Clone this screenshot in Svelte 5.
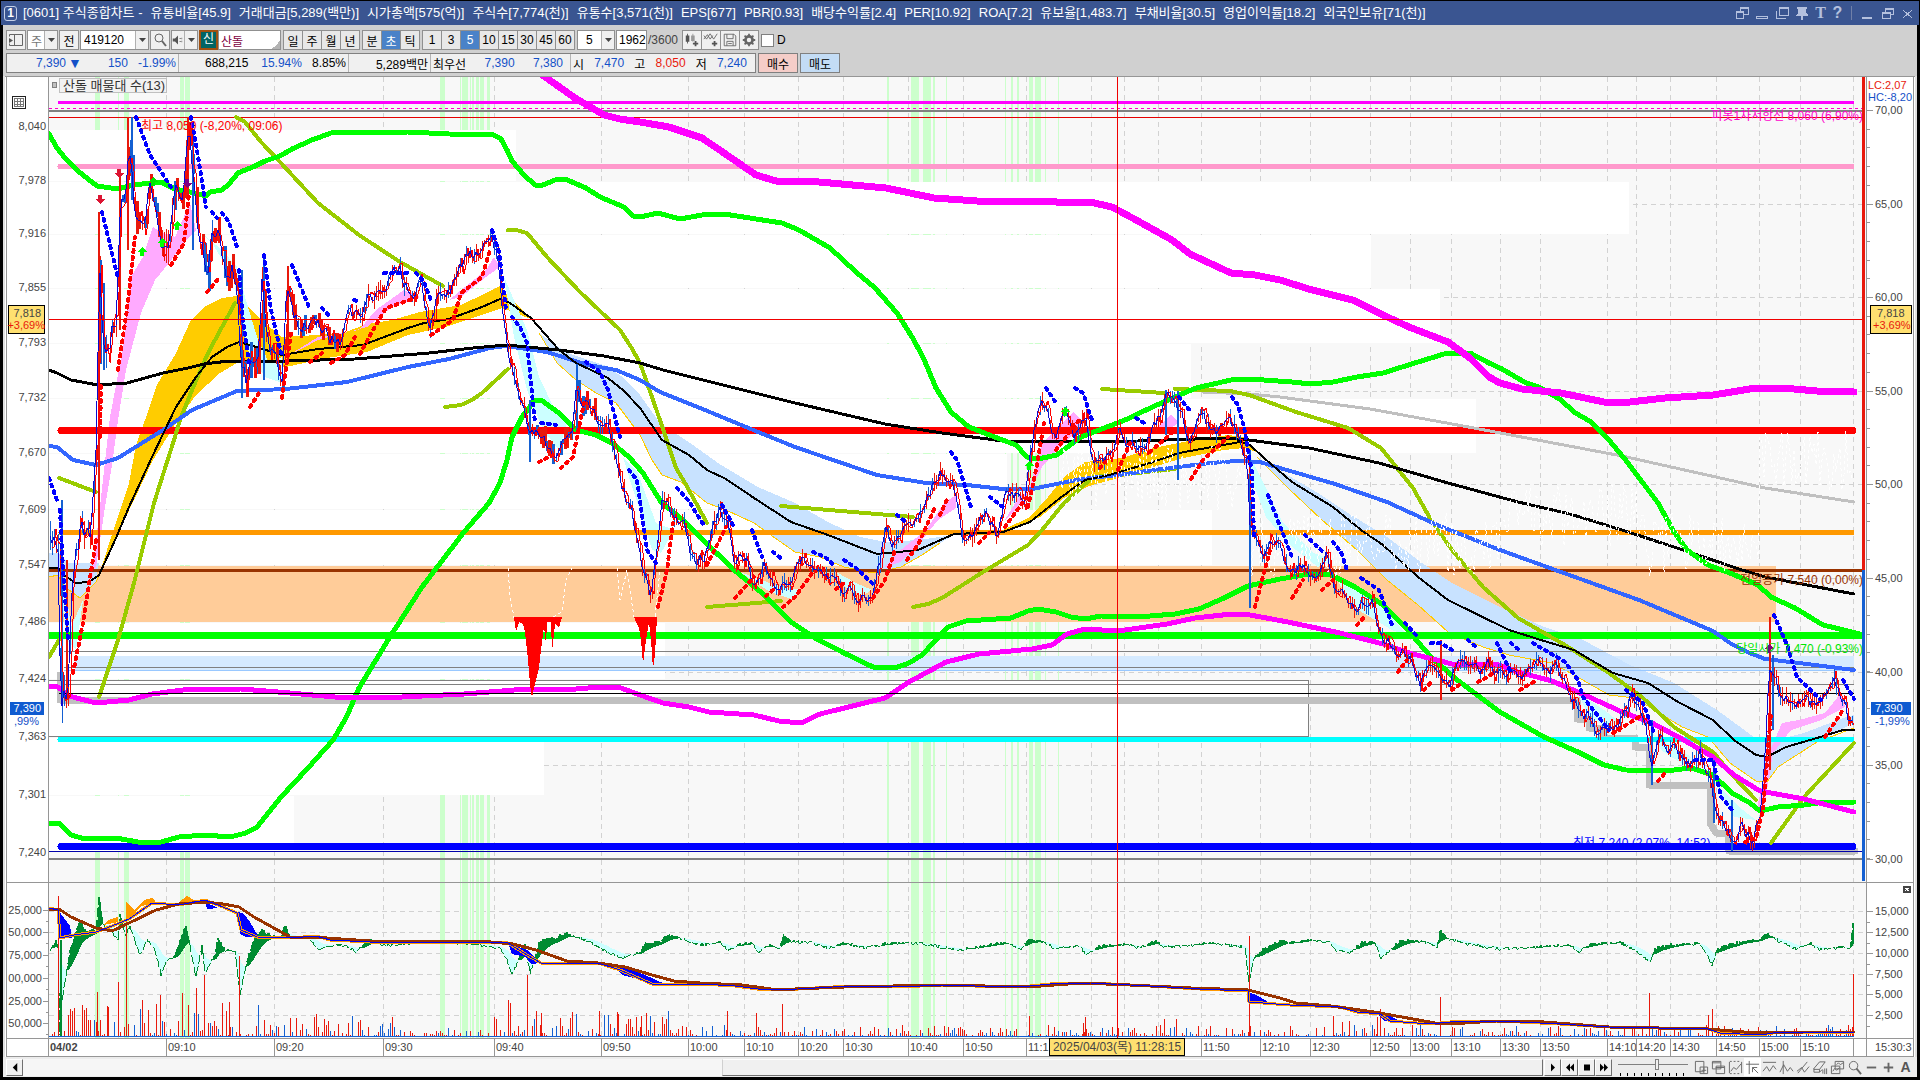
<script>
  // Title bar
  const stats = [
    '[0601] 주식종합차트 -', '유통비율[45.9]', '거래대금[5,289(백만)]', '시가총액[575(억)]', '주식수[7,774(천)]',
    '유통수[3,571(천)]', 'EPS[677]', 'PBR[0.93]', '배당수익률[2.4]', 'PER[10.92]', 'ROA[7.2]', '유보율[1,483.7]',
    '부채비율[30.5]', '영업이익률[18.2]', '외국인보유[71(천)]'
  ];

  // Toolbar state
  let code = $state('419120');
  let name = $state('산돌');
  let count = $state('1962');
  let unit = $state('초');
  let step = $state('5');
  let dual = $state(false);
  let zoom = $state(56);

  const periods = ['일', '주', '월', '년'];
  const units = ['분', '초', '틱'];
  const steps = ['1', '3', '5', '10', '15', '30', '45', '60'];

  // Axes
  const times = [
    [166, '09:10'], [274, '09:20'], [383, '09:30'], [494, '09:40'], [601, '09:50'], [688, '10:00'], [744, '10:10'],
    [798, '10:20'], [843, '10:30'], [908, '10:40'], [963, '10:50'], [1026, '11:1'], [1091, ''], [1124, ''],
    [1158, ''], [1201, '11:50'], [1260, '12:10'], [1310, '12:30'], [1370, '12:50'], [1410, '13:00'],
    [1451, '13:10'], [1500, '13:30'], [1540, '13:50'], [1607, '14:10'], [1636, '14:20'], [1670, '14:30'],
    [1716, '14:50'], [1759, '15:00'], [1800, '15:10'], [1853, '']
  ];
  const prices = [
    [125, '8,040'], [179, '7,978'], [232, '7,916'], [286, '7,855'], [341, '7,793'], [396, '7,732'], [451, '7,670'],
    [508, '7,609'], [563, '7,547'], [620, '7,486'], [677, '7,424'], [735, '7,363'], [793, '7,301'], [851, '7,240']
  ];
  const ratios = [
    [110, '70,00'], [204, '65,00'], [297, '60,00'], [391, '55,00'], [484, '50,00'],
    [578, '45,00'], [672, '40,00'], [765, '35,00'], [859, '30,00']
  ];
  const leftVolumes = [[910, '25,000'], [932, '50,000'], [955, '75,000'], [978, '00,000'], [1001, '25,000'], [1023, '50,000']];
  const rightVolumes = [[911, '15,000'], [932, '12,500'], [953, '10,000'], [974, '7,500'], [994, '5,000'], [1015, '2,500']];
  const minorTicks = Array.from({ length: 41 }, (_, i) => 110 + Math.round(i * 18.7)).filter((y) => y < 880);

  // Volume at price: [top, bottom, right edge]
  const bands = [
    [130, 181, 516], [182, 234, 1629], [235, 288, 1371], [289, 343, 1440], [344, 398, 1191], [399, 453, 1476],
    [454, 509, 1007], [510, 565, 1212], [623, 679, 665], [738, 795, 544], [796, 851, 294]
  ];
  // Highlighted sessions: [left, width]
  const sessions = [
    [95, 5], [118, 1], [124, 5], [180, 4], [185, 5], [440, 5], [460, 1], [462, 6], [470, 1], [472, 2], [476, 3],
    [480, 4], [487, 3], [887, 2], [911, 8], [923, 8], [933, 2], [946, 1], [1005, 1], [1011, 2], [1017, 2],
    [1029, 4], [1035, 6], [1045, 1], [1058, 1]
  ];

  const clouds = [
    ['#c8e2ff', '49,553 58,553 69,563 99,563 96,582 80,598 65,587 58,575 49,577'],
    ['#ffcc00', '99,575 107,550 118,517 129,483 136,445 145,420 157,385 176,353 190,322 204,307 222,298 237,296 249,307 261,320 282,337 318,335 343,333 367,324 392,320 420,312 461,305 486,293 500,286 510,298 531,319 502,308 490,312 473,318 445,327 408,335 367,352 327,358 286,367 261,363 237,363 220,373 196,395 176,423 153,460 134,500 107,557'],
    ['#c8e2ff', '539,333 567,353 604,365 624,378 640,395 660,423 693,445 718,463 758,487 795,503 828,522 860,537 885,542 918,540 954,535 940,543 922,555 901,567 873,573 844,567 820,557 795,552 775,538 754,523 726,510 707,503 681,482 662,475 652,460 640,435 616,403 596,393 576,380 557,363'],
    ['#ffcc00', '1003,530 1030,517 1048,497 1064,477 1085,462 1122,458 1154,448 1183,442 1228,435 1244,437 1256,452 1244,448 1224,450 1183,458 1150,468 1122,477 1089,486 1064,498 1040,517 1007,530'],
    ['#c8e2ff', '1257,457 1279,470 1318,493 1348,513 1387,537 1422,563 1452,583 1500,607 1544,627 1583,640 1630,665 1674,683 1717,710 1758,740 1767,742 1804,733 1843,718 1854,715 1854,723 1817,742 1778,767 1767,782 1756,781 1730,763 1708,737 1682,727 1635,698 1609,695 1574,675 1552,663 1509,655 1483,647 1448,632 1418,605 1387,580 1357,550 1322,520 1288,488'],
    ['#ffaaff', '92,577 103,480 110,417 122,353 131,277 143,257 153,227 163,233 175,237 190,203 196,230 184,243 169,263 155,280 141,313 126,370 118,420 112,465 105,507 96,567'],
    ['#ffaaff', '286,357 318,337 359,330 376,310 404,290 420,297 392,307 367,327 318,340'],
    ['#ffaaff', '449,300 486,270 494,257 500,267 486,277 461,297'],
    ['#ffaaff', '885,567 897,553 926,530 944,503 956,495 956,508 938,520 922,540 901,562'],
    ['#ffaaff', '1003,523 1020,495 1028,493 1042,443 1056,430 1073,412 1085,423 1060,447 1042,467 1032,487 1015,510'],
    ['#ffaaff', '1154,430 1171,415 1179,423 1167,430'],
    ['#ffaaff', '1756,813 1769,753 1782,723 1799,720 1825,713 1841,693 1845,707 1821,720 1791,730 1773,753 1765,803'],
    ['#ccffff', '60,575 66,590 71,627 83,600 76,650 66,640'],
    ['#ccffff', '198,230 222,250 237,267 245,297 257,337 269,363 282,357 282,383 265,377 249,353 241,320 233,277 212,243'],
    ['#ccffff', '504,277 527,330 539,377 555,410 567,423 559,450 543,430 527,390 514,337'],
    ['#ccffff', '623,457 638,473 656,523 674,530 661,553 652,550 643,520 629,477'],
    ['#ccffff', '1249,453 1262,480 1283,523 1314,553 1333,560 1318,567 1292,547 1266,517 1253,483'],
    ['#ccffff', '1333,573 1357,590 1383,607 1409,637 1392,630 1353,607'],
    ['#ccffff', '1578,693 1604,710 1617,720 1609,730 1587,713'],
    ['#ccffff', '1652,733 1691,757 1687,767 1661,750'],
    ['#ccffff', '1713,780 1739,807 1756,820 1734,817'],
    ['#ccffff', '740,572 775,585 800,590 795,600 770,592'],
    ['#ccffff', '836,572 856,583 872,590 862,596 846,588']
  ];

  const goldEdges = [
    '539,333 557,363 576,380 596,393 616,403 640,435 652,460 662,475 681,482 707,503 726,510 754,523 775,538 795,552 820,557 844,567 873,573 901,567 922,555 940,543',
    '1257,457 1288,488 1322,520 1357,550 1387,580 1418,605 1448,632 1483,647 1509,655 1552,663 1574,675 1609,695 1635,698 1682,727 1708,737 1730,763 1756,781 1767,782 1778,767 1817,742 1854,728',
    '49,577 58,575 65,587 80,598 96,582 107,557'
  ];

  // Horizontal levels: [y, left, right, width, colour]
  const levels = [
    [102, 58, 1854, 3, '#ff00ff'], [110, 49, 1862, 2, '#808080'], [117, 49, 1862, 1, '#e60000'],
    [166, 60, 1852, 5, '#ff99cc'], [430, 61, 1853, 7, '#ff0000'], [532, 61, 1852, 5, '#ff9900'],
    [570, 49, 1862, 3, '#993300'], [635, 49, 1862, 7, '#00ff00'], [651, 64, 1854, 1, '#808080'],
    [667, 64, 1854, 1, '#808080'], [670, 64, 1854, 1, '#99c8ff'], [680, 49, 1308, 1, '#808080'],
    [684, 64, 1854, 1, '#808080'], [736, 49, 1308, 1, '#808080'],
    [739, 60, 1852, 5, '#00ffff'], [846, 61, 1853, 7, '#0000ff'], [851, 49, 1862, 1, '#0000aa'],
    [858, 49, 1862, 2, '#808080']
  ];

  // Moving averages and bands: [colour, width, points]
  const curves = [
    ['#c0c0c0', 3, '1203,392 1249,394 1280,397 1370,409 1474,428 1622,456 1765,488 1854,502'],
    ['#99cc00', 4, '59,478 96,492'],
    ['#99cc00', 4, '49,657 59,640'],
    ['#99cc00', 4, '99,697 118,640 134,583 154,503 174,440 180,420 192,390 208,353 235,303'],
    ['#99cc00', 4, '236,117 245,122 261,142 280,162 318,203 359,235 400,262 443,286'],
    ['#99cc00', 4, '508,230 516,230 527,233 547,257 580,292 620,330 631,347 640,363 646,380 661,423 676,468 685,483 707,523'],
    ['#99cc00', 4, '445,407 461,405 472,400 482,393 508,369'],
    ['#99cc00', 4, '707,607 781,601'],
    ['#99cc00', 4, '781,506 913,517'],
    ['#99cc00', 4, '913,607 928,604 942,598 983,572 1028,545 1042,530 1064,503 1093,477 1118,475 1175,469'],
    ['#99cc00', 4, '1102,389 1164,393'],
    ['#99cc00', 4, '1175,389 1230,391 1249,395 1296,412 1348,428 1381,448 1413,488 1431,520 1452,550 1483,587 1518,618 1565,645 1609,673 1643,698 1674,727 1713,752 1734,777 1756,800'],
    ['#99cc00', 4, '1771,843 1804,797 1854,743'],
    ['#3366ff', 4, '49,446 57,447 73,460 96,465 118,458 163,430 192,410 237,391 286,389 347,382 408,367 449,359 490,348 506,346 547,352 588,365 616,370 640,380 660,392 705,410 758,432 795,447 877,475 926,483 967,485 1003,489 1032,489 1081,479 1118,475 1162,469 1211,463 1236,461 1260,462 1280,468 1335,484 1387,502 1435,524 1500,550 1561,572 1639,600 1713,631 1730,643 1747,652 1765,659 1799,663 1854,670'],
    ['#000000', 3, '49,370 57,373 71,380 98,385 127,383 163,373 188,368 204,364 229,361 286,361 355,359 429,353 473,348 506,345 559,350 604,356 640,363 663,370 791,402 885,424 942,433 1003,441 1044,442 1138,441 1224,438 1249,440 1309,448 1379,463 1448,483 1518,502 1570,514 1622,530 1674,547 1739,569 1765,577 1854,594'],
    ['#000000', 2, '49,568 58,568 65,576 76,583 89,582 99,575 116,538 129,507 152,457 176,407 196,377 212,357 227,347 239,342 253,346 282,355 318,349 363,345 408,328 424,323 449,319 482,307 500,299 510,303 531,318 559,350 576,363 608,378 624,391 640,408 662,440 689,455 707,470 726,479 754,498 791,522 828,535 877,554 918,550 954,534 1003,532 1030,522 1060,498 1085,480 1109,475 1150,463 1179,453 1240,442 1250,445 1264,458 1292,482 1333,507 1361,530 1383,545 1418,577 1448,600 1509,630 1544,641 1574,650 1613,673 1648,683 1678,702 1713,720 1734,740 1756,755 1767,757 1786,747 1817,738 1843,730 1854,730'],
    ['#00ff00', 5, '49,134 57,148 65,158 78,171 88,179 97,186 118,189 133,185 161,182 175,189 190,192 198,194 206,196 210,192 222,190 229,184 238,173 253,167 265,161 280,156 292,149 312,140 331,133 408,132 449,134 494,135 501,139 507,150 512,161 524,175 535,185 543,185 555,180 565,179 586,188 600,197 624,207 633,216 640,217 658,213 680,219 702,215 724,214 782,223 799,230 830,248 856,272 875,288 897,313 912,337 923,357 936,388 951,412 969,427 992,436 1016,445 1027,457 1038,459 1057,455 1081,437 1107,427 1125,420 1146,410 1168,400 1196,388 1231,380 1250,379 1292,382 1311,384 1333,382 1357,377 1383,373 1418,362 1444,354 1470,353 1489,363 1502,369 1526,383 1539,387 1561,400 1574,412 1591,422 1609,440 1624,458 1643,483 1658,503 1674,532 1687,550 1708,565 1730,573 1758,585 1771,597 1795,608 1823,625 1860,634'],
    ['#00ff00', 5, '49,823 59,823 71,835 85,839 116,838 138,842 161,842 179,837 205,835 230,837 246,833 257,827 281,797 308,768 333,740 346,718 359,688 388,640 422,587 464,532 489,503 500,483 507,460 512,437 522,417 535,400 541,400 559,413 576,430 596,435 612,443 629,457 643,473 661,502 683,520 700,537 734,570 762,593 791,622 815,638 844,653 873,667 895,668 909,663 922,655 934,642 948,627 966,621 1011,618 1028,611 1038,609 1056,612 1071,617 1085,619 1101,616 1138,617 1175,614 1199,609 1224,598 1248,586 1280,579 1309,574 1331,575 1355,587 1383,605 1405,627 1431,657 1457,680 1500,712 1544,737 1578,752 1604,765 1626,770 1665,771 1691,768 1713,775 1732,793 1750,803 1760,811 1778,807 1804,805 1825,802 1854,802'],
    ['#ff00ff', 5, '49,686 58,687 69,696 96,703 129,700 152,694 183,690 241,689 290,693 335,697 402,697 464,694 527,689 576,689 600,687 621,688 643,696 663,703 689,707 709,712 754,715 779,721 801,723 820,714 885,698 909,682 946,662 979,654 1032,649 1052,645 1067,634 1085,629 1118,631 1167,624 1195,618 1232,614 1250,615 1288,622 1340,633 1383,644 1413,654 1452,664 1496,664 1518,672 1552,681 1587,696 1622,712 1652,723 1682,739 1713,757 1734,775 1760,791 1804,799 1854,812'],
    ['#000000', 1, '59,693 1854,693'],
    ['#ff00ff', 7, '541,74 575,98 604,115 620,119 640,122 669,127 702,138 724,153 756,175 776,181 808,181 886,188 934,198 977,201 1047,201 1066,203 1090,202 1112,207 1138,221 1172,240 1190,254 1231,273 1255,275 1280,280 1312,290 1353,300 1383,315 1409,327 1448,342 1470,358 1489,377 1500,383 1522,389 1561,393 1604,402 1630,402 1665,398 1713,395 1756,388 1782,388 1817,391 1854,392']
  ];
  const lowTrail = '60,675 60,700 1577,700 1577,719 1589,719 1589,728 1602,728 1602,738 1635,738 1635,747 1649,747 1649,785 1710,785 1710,823 1716,833 1728,833 1729,851 1855,851';

  // Parabolic SAR runs
  const sarDown = [
    '49,478 58,503', '60,510 63,570 68,640', '102,212 118,278', '136,117 150,155 171,187', '191,117 197,150 206,207', '212,212 217,218', '222,213 229,222 237,247',
    '239,270 243,320 249,363', '264,255 271,310 282,357', '292,265 300,285 309,307', '322,308 331,318', '354,300 360,302', '384,273 410,273',
    '416,273 424,282 431,300', '492,230 499,252 506,310', '512,317 520,327 527,343 535,423', '541,423 556,425', '586,362 600,372 608,390 620,437',
    '629,470 637,480 647,550 656,563', '677,488 688,500 705,527', '722,505 734,527', '752,530 762,557', '773,552 783,560',
    '813,552 825,557 836,567', '844,560 856,568 873,584', '897,515 907,523', '951,452 957,460 971,507', '990,497 1003,507',
    '1046,388 1056,403', '1075,388 1083,393 1093,423', '1136,418 1148,425', '1179,397 1191,412', '1232,397 1238,405 1244,427 1252,473 1254,537',
    '1268,495 1292,557', '1305,535 1322,551', '1333,542 1341,552 1348,573', '1361,578 1379,590 1392,625', '1405,623 1416,635',
    '1431,643 1440,643 1452,650', '1468,640 1476,647', '1497,643 1511,673', '1511,643 1519,650', '1533,643 1565,662 1578,680 1583,697 1609,730',
    '1626,690 1643,703 1654,733', '1695,760 1713,760 1721,797 1734,812', '1774,615 1787,645 1797,677 1821,700', '1843,680 1854,699'
  ];
  const sarUp = [
    '73,673 83,623 96,540', '100,437 101,385', '118,370 127,310 135,237', '171,265 184,243 189,193', '207,292 220,277', '250,407 261,390',
    '282,398 291,333', '310,362 322,353', '331,363 345,355 355,337', '360,354 373,330 386,308 416,298',
    '431,335 453,320 461,293 482,277 490,250', '539,462 553,455', '561,468 573,457 584,403', '658,607 667,570 673,523',
    '707,565 726,527', '735,598 754,577', '766,596 773,590', '783,607 795,597 813,572', '836,589 844,583', '873,598 885,580 895,550',
    '907,560 918,545 936,505', '940,515 948,497', '979,543 989,533', '1005,527 1026,498', '1028,507 1036,470 1044,423',
    '1056,450 1079,420', '1100,468 1105,462', '1118,470 1130,443', '1150,452 1175,430', '1191,479 1203,460 1228,437', '1255,607 1270,550',
    '1292,598 1303,580', '1322,590 1333,580', '1357,625 1366,615', '1398,672 1407,660', '1424,690 1433,680', '1452,690 1459,685',
    '1478,682 1496,672', '1520,690 1537,680', '1613,733 1639,717', '1658,781 1665,773', '1745,842 1756,838 1763,810 1771,713',
    '1825,737 1843,710'
  ];

  // Small deterministic generator so every render draws the same ticks
  function makeRandom(seed) {
    let s = seed;
    return () => {
      s = (s * 1664525 + 1013904223) % 4294967296;
      return s / 4294967296;
    };
  }

  function parse(text) {
    return text.split(' ').map((p) => p.split(',').map(Number));
  }

  function sample(points, x) {
    const i = points.findIndex((p) => p[0] >= x);
    if (i <= 0) return points[i === 0 ? 0 : points.length - 1][1];
    const [x0, y0] = points[i - 1];
    const [x1, y1] = points[i];
    return y0 + ((y1 - y0) * (x - x0)) / (x1 - x0 || 1);
  }

  const closes = parse(
    '49,530 58,545 61,690 67,690 72,600 82,520 90,540 97,440 99,260 103,350 110,330 117,310 120,210 127,190 129,140 133,190 138,220 145,210 150,170 155,200 162,235 168,245 175,205 182,190 187,135 190,150 195,200 200,230 206,265 212,245 220,245 226,265 232,260 238,300 242,370 247,390 252,370 258,370 262,290 266,340 270,370 276,360 282,385 287,295 292,310 300,320 312,325 322,330 330,340 340,340 350,310 362,320 370,300 380,290 388,280 400,275 410,295 420,285 430,330 440,290 452,285 465,265 475,260 483,240 491,237 497,260 504,330 512,370 520,400 528,440 535,430 545,440 555,450 565,440 572,430 576,380 584,400 592,410 600,425 610,440 620,470 630,510 640,560 650,595 656,560 662,510 667,495 675,520 685,530 690,550 697,560 705,555 712,530 720,515 727,520 735,570 745,560 755,588 765,570 775,588 785,588 795,570 805,560 815,565 830,578 845,585 857,597 872,597 880,560 886,525 892,540 900,530 910,535 920,510 930,490 942,475 947,485 955,490 962,530 975,530 985,515 997,530 1005,490 1012,485 1025,500 1030,450 1040,400 1048,410 1055,440 1065,405 1075,430 1085,420 1095,460 1105,465 1120,430 1130,445 1145,440 1160,420 1168,400 1178,410 1190,440 1200,418 1215,435 1228,415 1238,430 1247,460 1250,530 1260,560 1275,540 1290,580 1300,560 1315,580 1327,555 1335,590 1350,608 1360,600 1372,600 1385,640 1400,650 1410,650 1420,682 1428,655 1440,688 1450,680 1458,660 1470,675 1490,668 1505,680 1515,680 1530,670 1540,662 1555,670 1570,690 1580,710 1595,725 1608,733 1620,720 1630,700 1645,720 1651,765 1660,745 1675,750 1690,765 1700,750 1710,770 1716,810 1728,825 1733,842 1742,820 1752,838 1760,810 1766,740 1769,670 1773,670 1780,690 1795,700 1812,705 1825,700 1835,690 1843,700 1850,725 1854,720'
  );

  const random = makeRandom(419120);
  const swing = (x) => (x < 260 ? 26 : x < 300 ? 22 : x < 520 ? 14 : x < 660 ? 16 : 14);
  const candles = [];
  const closeLine = [];
  const fastLine = [];
  let drift = 0;
  for (let x = 50; x < 1854; x += 2) {
    drift = drift * 0.7 + (random() - 0.5) * swing(x) * 0.9;
    const y = sample(closes, x) + drift;
    const up = random() > 0.4;
    const reach = swing(x) * (0.2 + random() * 0.8);
    const body = (x > 120 && x < 340) || (x > 535 && x < 595);
    closeLine.push(`${x},${Math.round(y)}`);
    fastLine.push(`${x + 2},${Math.round(y + (random() - 0.5) * swing(x))}`);
    candles.push({
      x,
      y1: Math.round(y - reach * 0.7),
      y2: Math.round(y + reach * 0.7),
      w: body && random() > 0.3 ? 3 : 1,
      fill: up ? '#e8190c' : '#1460d2'
    });
  }
  // Long wicks
  const wicks = [
    [61, 500, 700, '#1460d2'], [66, 560, 700, '#e8190c'], [98, 212, 560, '#e8190c'], [100, 260, 364, '#1460d2'], [103, 283, 370, '#1460d2'],
    [119, 175, 330, '#e8190c'], [127, 117, 250, '#e8190c'], [131, 117, 200, '#1460d2'], [187, 117, 200, '#e8190c'],
    [192, 132, 250, '#1460d2'], [241, 270, 398, '#1460d2'], [263, 257, 380, '#1460d2'], [287, 266, 360, '#e8190c'], [529, 400, 462, '#1460d2'],
    [576, 364, 430, '#1460d2'], [1165, 390, 435, '#1460d2'], [1177, 391, 480, '#1460d2'], [1249, 450, 608, '#1460d2'], [1440, 640, 700, '#e8190c'],
    [1651, 720, 785, '#1460d2'], [1713, 760, 823, '#1460d2'], [1731, 800, 851, '#1460d2'], [1769, 617, 770, '#e8190c'], [1772, 655, 730, '#1460d2']
  ];

  // Faint echo trace behind the right half of the price panel
  const ghost = [];
  for (let x = 1060; x < 1854; x += 2) {
    const base = x < 1250 ? 478 : x < 1500 ? 545 : x < 1640 ? 515 : x < 1760 ? 545 : 460;
    ghost.push(`${x},${Math.round(base + (random() - 0.5) * 64)}`);
  }

  // Lower panel
  const spikes = [
    [58, 896], [72, 1011], [97, 992], [107, 1006], [118, 982], [126, 915], [142, 1000], [160, 995], [182, 993], [196, 988],
    [204, 975], [229, 1002], [239, 956], [316, 1014], [508, 1000], [510, 1003], [527, 975], [541, 1013], [599, 1011],
    [617, 1012], [630, 1019], [641, 1016], [727, 1011], [756, 1013], [782, 1004], [1029, 1016], [1083, 1023], [1085, 1017],
    [1164, 1019], [1176, 1019], [1210, 1026], [1249, 936], [1333, 1016], [1342, 1022], [1349, 1021], [1377, 1017],
    [1380, 1009], [1440, 997], [1649, 993], [1708, 1015], [1712, 1009], [1853, 974]
  ];
  const volumes = [];
  for (let x = 50; x < 1854; x += 2) {
    const peak = x < 270 ? 34 : x < 400 ? 20 : x < 490 ? 8 : x < 670 ? 26 : 11;
    const h = 1 + Math.round(Math.pow(random(), 3) * peak);
    volumes.push({ x, h, fill: random() > 0.3 ? '#e8190c' : '#1460d2' });
  }

  const strength = parse(
    '49,953 56,940 58,950 60,1035 62,1000 70,950 80,920 85,930 96,930 99,896 103,925 110,930 118,940 120,915 126,935 129,925 140,955 147,940 155,950 161,975 166,963 175,955 186,925 190,945 196,978 202,945 205,973 215,955 218,937 225,950 235,950 240,995 247,960 255,938 262,930 270,935 280,937 285,925 290,937 310,938 318,950 330,945 345,945 356,952 370,938 385,946 420,942 460,943 500,948 507,960 512,975 525,945 530,973 540,940 555,938 566,933 590,942 600,948 615,955 620,958 632,955 640,953 645,943 660,942 668,935 680,938 700,945 720,942 728,950 740,944 752,943 758,953 770,945 780,948 783,935 790,941 810,942 828,948 845,943 865,948 885,943 920,943 960,950 1000,943 1005,942 1020,950 1029,940 1045,942 1055,948 1080,946 1086,955 1100,946 1125,944 1140,948 1155,941 1165,947 1180,946 1210,943 1245,947 1249,983 1253,960 1262,950 1280,941 1290,943 1310,940 1330,942 1335,950 1350,953 1362,942 1375,942 1381,958 1390,950 1400,941 1410,940 1430,943 1437,947 1440,930 1447,938 1460,942 1480,946 1500,949 1570,945 1578,952 1590,944 1620,942 1637,951 1650,962 1655,948 1670,945 1700,943 1712,965 1718,948 1740,942 1755,940 1769,934 1780,942 1797,949 1810,943 1820,950 1840,947 1850,948 1853,924'
  );
  const strengthLine = [];
  const strengthBars = [];
  let average = 948;
  for (let x = 50; x <= 1853; x++) {
    const y = sample(strength, x) + (random() - 0.5) * 3;
    average += (y - average) * 0.08;
    strengthLine.push(`${x},${Math.round(y)}`);
    strengthBars.push({ x, top: Math.min(y, average), h: Math.abs(y - average), fill: y < average ? '#008c32' : '#ccffff' });
  }

  const balance = '49,908 58,910 60,938 74,935 96,932 112,926 129,919 152,903 179,905 205,900 223,907 237,913 241,930 257,937 290,938 316,936 330,940 370,942 491,942 508,943 527,955 541,963 598,963 620,970 652,984 700,984 735,986 765,990 798,989 850,986 920,986 950,985 1000,987 1030,986 1050,984 1091,983 1150,986 1200,989 1248,991 1249,1002 1290,1005 1340,1007 1357,1012 1380,1014 1390,1021 1430,1024 1460,1021 1500,1021 1560,1024 1609,1027 1708,1029 1720,1033 1760,1035 1780,1032 1854,1032';
  const trend = '49,909 59,909 71,917 96,928 112,931 129,923 156,910 179,904 205,902 223,904 239,907 254,917 290,937 312,937 370,941 424,941 491,942 513,944 536,950 567,961 598,963 625,967 652,975 674,981 700,983 742,985 771,989 795,989 844,987 942,985 1028,987 1081,983 1130,985 1191,988 1248,990 1280,998 1296,1003 1331,1006 1374,1012 1413,1019 1435,1023 1465,1023 1496,1021 1544,1022 1609,1027 1708,1029 1756,1033 1804,1032 1854,1032';
  const balanceFills = [
    ['#0000ff', '58,910 60,938 72,938 70,926'], ['#0000ff', '205,902 207,909 218,908'],
    ['#0000ff', '238,912 240,934 246,937 258,936 250,922 244,914'], ['#0000ff', '508,943 512,954 526,957 531,964 541,963 527,950'],
    ['#0000ff', '598,963 617,970 622,975 638,979 652,985 665,984 645,975 620,966'], ['#0000ff', '757,986 757,990 780,991'],
    ['#0000ff', '1249,992 1249,1002 1270,1003 1258,996'], ['#0000ff', '1375,1012 1384,1021 1400,1021 1388,1015'],
    ['#ff9900', '126,920 126,901 134,910 144,900 152,898 156,901 140,907 132,917'], ['#ff9900', '178,903 187,896 196,901 190,905'],
    ['#ff9900', '103,925 108,920 118,917 118,922']
  ];

  // Signal arrows: [x, y, direction, colour]
  const arrows = [
    [100, 199, 'down', '#dc1432'], [119, 173, 'down', '#dc1432'], [187, 183, 'down', '#800080'], [142, 252, 'up', '#00ff00'],
    [162, 243, 'up', '#00ff00'], [177, 226, 'up', '#00ff00'], [153, 182, 'up', '#00e600'], [1029, 466, 'up', '#00ff00'],
    [1065, 412, 'up', '#00ff00'], [1769, 649, 'up', '#800080']
  ];
</script>

{#snippet caret()}
  <svg class="caret" viewBox="0 0 7 4" aria-hidden="true"><path d="M0 0h7L3.5 4z" /></svg>
{/snippet}

<div class="window">
  <header class="titlebar">
    <span class="badge">1</span>
    <h1>{#each stats as stat}<span>{stat}</span>{/each}</h1>
    <div class="window-buttons">
      <button aria-label="화면 연결"><svg viewBox="0 0 14 14"><path d="M1.5 5.5h7v7h-7zM5.5 5.5v-4h8v7h-5" /><path d="M5 2h9M1 6h8" /></svg></button>
      <button aria-label="접기"><svg viewBox="0 0 14 14"><path d="M1.5 10.5h11v2h-11z" /></svg></button>
      <button aria-label="복제"><svg viewBox="0 0 14 14"><path d="M4.5 1.5h9v8h-9zM4 2.500h9M1.500 4.500v8h9" /></svg></button>
      <button aria-label="고정"><svg viewBox="0 0 14 14" class="solid"><path d="M2 1h10v2h-1v4l2 2v1H8v4H6v-4H1V9l2-2V3H2z" /></svg></button>
      <button class="letter" aria-label="글꼴">T</button>
      <button class="letter sans" aria-label="도움말">?</button>
      <i class="divider"></i>
      <button aria-label="최소화"><svg viewBox="0 0 14 14"><path d="M2 11h10M2 12h10" /></svg></button>
      <button aria-label="이전 크기"><svg viewBox="0 0 14 14"><path d="M2.500 6.500h8v6h-8zM2 7h9M5.500 6v-3.500h8v6h-3M5 3h9" /></svg></button>
      <button aria-label="닫기"><svg viewBox="0 0 14 14"><path d="M3 4l9 8M12 4l-9 8" /></svg></button>
    </div>
  </header>

  <section class="toolbar">
    <div class="controls">
      <button class="tool" aria-label="패널"><svg viewBox="0 0 16 16"><path d="M1.500 4.500v-2h13v11h-13v-2M6.500 2.500v11" /><path class="ink" d="M1 6v5l4-2.500z" /></svg></button>
      <button class="pick muted">주<i>{@render caret()}</i></button>
      <button class="tool">전</button>
      <label class="field code"><input aria-label="종목코드" bind:value={code} /><i>{@render caret()}</i></label>
      <button class="tool" aria-label="검색"><svg viewBox="0 0 16 16"><circle cx="7" cy="6" r="4" /><path d="M10 9l4 5" stroke-width="2" /></svg></button>
      <button class="pick speaker" aria-label="소리"><svg viewBox="0 0 16 16"><path class="ink" d="M1 6h3l4-4v12L4 10H1z" /><path d="M10 6h2M10 10h2M13 5v2M13 9v2" /></svg><i>{@render caret()}</i></button>
      <span class="credit">신</span>
      <input class="name" aria-label="종목명" bind:value={name} />
      <div class="group">
        {#each periods as p}<button>{p}</button>{/each}
      </div>
      <div class="group">
        {#each units as u}<button class:active={unit === u} onclick={() => (unit = u)}>{u}</button>{/each}
      </div>
      <div class="group">
        {#each steps as s}<button class:active={step === s} onclick={() => (step = s)}>{s}</button>{/each}
      </div>
      <button class="pick step">{step}<i>{@render caret()}</i></button>
      <input class="count" aria-label="봉 개수" bind:value={count} />
      <span class="total">/3600</span>
      <div class="group icons">
        <button aria-label="봉 추가"><svg viewBox="0 0 18 18"><path class="ink" d="M2 4h4v7H2zM3.500 2h1v11h-1z" /><path class="soft" d="M8 4h4v6H8zM9.500 2h1v9h-1z" /><path class="ink" d="M12 10h2v2h2v2h-2v2h-2v-2h-2v-2h2z" /></svg></button>
        <button aria-label="지표 추가"><svg viewBox="0 0 18 18"><path d="M1 4l3 4 4-6 4 6 4-6M1 8l4-5 3 5 3-4" stroke-width="1" /><path class="ink" d="M12 10h2v2h2v2h-2v2h-2v-2h-2v-2h2z" /></svg></button>
        <button aria-label="저장"><svg viewBox="0 0 18 18"><path d="M2.500 2.500h11l2 2v11h-13zM5.500 2.500v5h7v-5M5.500 15.500v-5h7v5M7 13h4" /></svg></button>
        <button aria-label="설정"><svg viewBox="0 0 18 18"><circle cx="9" cy="9" r="4" stroke-width="3" /><path d="M9 2v3M9 13v3M2 9h3M13 9h3M4 4l2 2M12 12l2 2M4 14l2-2M12 6l2-2" stroke-width="2" /></svg></button>
      </div>
      <label class="check"><input type="checkbox" bind:checked={dual} />D</label>
    </div>

    <div class="quote">
      <div class="cells">
        <div class="cell first fall"><b>7,390</b><b class="mark">▼</b><b>150</b><b>-1.99%</b></div>
        <div class="cell second"><b>688,215</b><b class="fall">15.94%</b><b>8.85%</b></div>
        <div class="cell third"><b>5,289백만</b></div>
        <div class="cell fourth"><b>최우선</b><b class="fall">7,390</b><b class="fall">7,380</b></div>
        <div class="cell fifth"><b>시</b><b class="fall">7,470</b><b>고</b><b class="rise">8,050</b><b>저</b><b class="fall">7,240</b></div>
      </div>
      <button class="order buy">매수</button>
      <button class="order sell">매도</button>
    </div>
  </section>

  <main class="chart">
    <svg class="plot" viewBox="5 76 1910 981" preserveAspectRatio="none" role="img" aria-label="산돌 주식종합차트">
      <defs>
        <clipPath id="price"><rect x="49" y="77" width="1813" height="805" /></clipPath>
        <clipPath id="axis"><rect x="1867" y="77" width="46" height="980" /></clipPath>
        <clipPath id="left-axis"><rect x="7" y="77" width="41" height="961" /></clipPath>
      </defs>
      <rect x="5" y="76" width="1910" height="981" fill="#fff" />
      <rect x="49" y="77" width="1818" height="961" fill="#f8f8f8" />

      <g class="grid">
        {#each times as [x]}<path d="M{x + 0.5} 77V1038" />{/each}
        {#each ratios as [y]}<path d="M49 {y + 0.5}H1862" />{/each}
        {#each rightVolumes as [y]}<path d="M49 {y + 0.5}H1867" />{/each}
      </g>
      {#each sessions as [x, w]}<rect {x} y="77" width={w} height="961" fill="#ccffcc" />{/each}
      {#each bands as [top, bottom, right]}<rect x="49" y={top} width={right - 49} height={bottom - top} fill="#fff" />{/each}
      <rect x="49" y="566" width="1727" height="56" fill="#ffcc99" />
      <rect x="49" y="680" width="1259" height="57" fill="#fff" />
      <path d="M1308.500 680V737" stroke="#808080" fill="none" />
      <rect x="75" y="656" width="1779" height="14" fill="#d5eaff" />

      <g clip-path="url(#price)">
        {#each clouds as [fill, points]}<polygon {points} {fill} />{/each}
        {#each goldEdges as points}<polyline {points} class="line" stroke="#ffcc00" />{/each}
        <polyline points={lowTrail} class="line" stroke="#c0c0c0" stroke-width="7" />
        <text x="1573" y="847" fill="#0000ff">최저 7,240 (2,07%, 14:52)</text>
        {#each levels as [y, x1, x2, w, stroke]}
          <path d="M{x1} {y + 0.5}H{x2}" {stroke} stroke-width={w} stroke-linecap={w > 4 && x1 > 49 ? 'round' : 'butt'} />
        {/each}
        <path d="M49 108.500H1862" stroke="#ff00cc" stroke-dasharray="3 3" />
        {#each curves as [stroke, w, points]}<polyline {points} class="line" {stroke} stroke-width={w} />{/each}

        <polyline points={ghost.join(' ')} class="line ghost" />
        <polyline points="508,568 510,595 514,618 552,618 562,612 566,580 572,568" class="line ghost" />
        <polyline points="617,568 620,600 627,570 634,617 655,617 660,570" class="line ghost" />
        <polygon points="514,617 562,617 559,628 555,624 552,652 551,622 547,622 546,645 544,626 541,650 539,668 536,680 534,688 532,698 530,684 528,660 525,632 523,624 519,622 516,632" fill="#ff0000" />
        <polygon points="634,617 657,617 655,655 653,669 651,640 649,622 646,640 643,664 641,640 639,628 636,622" fill="#ff0000" />

        {#each candles as c}<rect x={c.x} y={c.y1} width={c.w} height={c.y2 - c.y1} fill={c.fill} />{/each}
        {#each wicks as [x, y1, y2, stroke]}<path d="M{x + 0.5} {y1}V{y2}" {stroke} stroke-width="2" />{/each}
        <polyline points={fastLine.join(' ')} class="line" stroke="#ff0000" />
        <polyline points={closeLine.join(' ')} class="line" stroke="#0a0ad2" />
        {#each sarDown as points}<polyline {points} class="line dots" stroke="#0000ff" />{/each}
        {#each sarUp as points}<polyline {points} class="line dots" stroke="#ff0000" />{/each}
        {#each arrows as [x, y, dir, fill]}
          <path d={dir === 'up' ? `M${x} ${y - 5}l5 5h-3v4h-4v-4h-3z` : `M${x} ${y + 5}l5-5h-3v-4h-4v4h-3z`} {fill} />
        {/each}

        <text x="141" y="130" fill="#ff0000">최고 8,050 (-8,20%, 09:06)</text>
        <text x="1863" y="120" fill="#ff00cc" text-anchor="end">피봇1차저항선 8,060 (6,90%)</text>
        <text x="1863" y="584" fill="#993300" text-anchor="end">전일종가 7,540 (0,00%)</text>
        <text x="1863" y="653" fill="#00e600" text-anchor="end">당일시가 7,470 (-0,93%)</text>
      </g>

      <!-- legend -->
      <rect x="52.500" y="82.500" width="4" height="5" fill="#c0c0c0" stroke="#808080" />
      <rect x="59.500" y="78.500" width="107" height="14" fill="#f2f2f2" stroke="#c0c0c0" />
      <text x="63" y="90" class="legend">산돌 매물대 수(13)</text>

      <!-- volume panel -->
      {#each strengthBars as b}<rect x={b.x} y={b.top} width="1" height={b.h} fill={b.fill} />{/each}
      <polyline points={strengthLine.join(' ')} class="line" stroke="#008c32" stroke-dasharray="9 3" />
      {#each volumes as v}<rect x={v.x} y={1037 - v.h} width="1" height={v.h} fill={v.fill} />{/each}
      {#each spikes as [x, y]}<path d="M{x + 0.5} {y}V1037" stroke="#e8190c" />{/each}
      <path d="M60.500 940V1037" stroke="#008c32" stroke-width="2" />
      <path d="M49 1036.500H1854" stroke="#1460d2" />
      {#each balanceFills as [fill, points]}<polygon {points} {fill} />{/each}
      <polyline points={balance} class="line" stroke="#ff9900" stroke-width="3" />
      <polyline points={trend} class="line" stroke="#993300" stroke-width="3" />
      <polyline points={balance} class="line" stroke="#0000ff" />

      <!-- crosshair -->
      <path d="M49 319.500H1862M1117.500 77V1038" stroke="#f00000" />

      <!-- frame -->
      <rect x="1862" y="77" width="3" height="493" fill="#e8190c" />
      <rect x="1862" y="570" width="3" height="311" fill="#1460d2" />
      <path d="M5 76.500H1915M6.500 76V1057M48.500 76V1056M1866.500 76V1056M1913.500 76V1057M6 882.500H1914M6 1038.500H1914M6 1056.500H1914" stroke="#969696" fill="none" />

      <g class="axis" clip-path="url(#left-axis)">
        {#each prices as [y, label]}<text x="46" y={y + 5} text-anchor="end">{label}</text>{/each}
        {#each leftVolumes as [y, label]}
          <text x="42" y={y + 4} text-anchor="end">{label}</text>
          <path d="M43 {y + 0.5}h5M46 {y + 11.5}h2" stroke="#969696" />
        {/each}
      </g>
      <g class="axis" clip-path="url(#axis)">
        {#each minorTicks as y}<path d="M1867 {y + 0.5}h3" stroke="#969696" />{/each}
        {#each ratios as [y, label]}
          <path d="M1867 {y + 0.5}h6" stroke="#969696" />
          <text x="1875" y={y + 4}>{label}</text>
        {/each}
        {#each rightVolumes as [y, label]}
          <path d="M1867 {y + 0.5}h6M1867 {y + 11.5}h3" stroke="#969696" />
          <text x="1875" y={y + 4}>{label}</text>
        {/each}
        <text x="1868" y="89" class="rise">LC:2,07</text>
        <text x="1868" y="101" class="fall">HC:-8,20</text>
        <text x="1875" y="1051">15:30:3</text>
      </g>

      <g class="axis">
        <text x="50" y="1051" font-weight="bold">04/02</text>
        {#each times as [x, label]}
          <path d="M{x + 0.5} 1039V1056" stroke="#969696" />
          {#if label}<text x={x + 2} y="1051">{label}</text>{/if}
        {/each}
      </g>

      <!-- price and time tags -->
      <g class="axis">
        <rect x="8.500" y="305.500" width="36" height="28" class="tag" />
        <text x="41" y="317" text-anchor="end">7,818</text>
        <text x="45" y="329" text-anchor="end" class="hot">+3,69%</text>
        <rect x="1870.500" y="305.500" width="41" height="28" class="tag" />
        <text x="1877" y="317">7,818</text>
        <text x="1873" y="329" class="hot">+3,69%</text>
        <rect x="10" y="702" width="34" height="13" fill="#0f5bd0" />
        <text x="41" y="712" text-anchor="end" class="on">7,390</text>
        <text x="39" y="725" text-anchor="end" class="fall">,99%</text>
        <rect x="1871" y="702" width="40" height="13" fill="#0f5bd0" />
        <text x="1875" y="712" class="on">7,390</text>
        <text x="1875" y="725" class="fall">-1,99%</text>
        <rect x="1049.500" y="1038.500" width="135" height="17" class="tag" />
        <text x="1117" y="1051" text-anchor="middle" class="stamp">2025/04/03(목) 11:28:15</text>
      </g>

      <g fill="none" stroke="#222">
        <rect x="12.500" y="96.500" width="13" height="12" stroke-width="1" />
        <path d="M14.500 98.500h9v8h-9zM17.500 98v9M20.500 98v9M14 101.500h10M14 104.500h10" stroke="#777" />
      </g>
      <rect x="1903" y="886" width="8" height="7" fill="#444" />
      <path d="M1905 888l4 3M1909 888l-4 3" stroke="#fff" />
    </svg>
  </main>

  <footer class="bottom">
    <div class="scroll">
      <button aria-label="왼쪽으로"><svg viewBox="0 0 8 8"><path d="M6 0v8L2 4z" /></svg></button>
      <div class="track"><div class="thumb"></div></div>
    </div>
    <div class="play">
      <button aria-label="재생"><svg viewBox="0 0 10 8"><path d="M3 0v8l4-4z" /></svg></button>
      <button aria-label="뒤로"><svg viewBox="0 0 10 8"><path d="M5 0v8L1 4zM9 0v8L5 4z" /></svg></button>
      <button aria-label="정지"><svg viewBox="0 0 10 8"><path d="M2 1h6v6H2z" /></svg></button>
      <button aria-label="앞으로"><svg viewBox="0 0 10 8"><path d="M1 0v8l4-4zM5 0v8l4-4z" /></svg></button>
    </div>
    <input class="zoom" type="range" aria-label="확대" bind:value={zoom} />
    <div class="drawing">
      <button aria-label="새 차트"><svg viewBox="0 0 16 16"><path d="M1.500 1.500h9v11h-9zM6.500 7.500h8v7h-8zM8 11h5M10.500 8v6" /></svg></button>
      <button aria-label="겹치기"><svg viewBox="0 0 16 16"><path d="M1.500 1.500h9v8h-9zM1 3h9M5.500 6.500h9v8h-9zM5 8h9" /></svg></button>
      <button aria-label="영역"><svg viewBox="0 0 16 16"><path d="M1.500 2v12M14.500 2v12M3 12l3-4 3 2 5-6" /><path d="M2 1.500h12M2 14.500h12" stroke-dasharray="2 2" /></svg></button>
      <button class="on" aria-label="십자선"><svg viewBox="0 0 16 16"><path d="M4.500 1v14M1 4.500h14M8 8l6 6M8 13V8h5" /></svg></button>
      <button aria-label="수평선"><svg viewBox="0 0 16 16"><path d="M1 2.500h14M1 12l4-5 3 5 4-6 3 4" /></svg></button>
      <button aria-label="수직선"><svg viewBox="0 0 16 16"><path d="M4.500 1v14M1 13l4-8 4 7 3-4 3 4" /></svg></button>
      <button aria-label="추세선"><svg viewBox="0 0 16 16"><path d="M2 14l10-12M1 12l5-4 3 5 5-6" /></svg></button>
      <button aria-label="모두 지우기"><svg viewBox="0 0 16 16"><path d="M1 9l6-7h6l-6 8H1zM7 10v3M7 13l3-3M1 9v4h6" /><path d="M10.500 14.500v-4M12.500 9v6M14.500 9v6" /></svg></button>
      <button aria-label="비교"><svg viewBox="0 0 16 16"><path d="M5.500 1.500h9v8h-9zM1.500 6.500h9v8h-9zM3 12l2-3 2 2 3-3M7 5l2-2 2 2 3-2" /></svg></button>
      <button aria-label="돋보기"><svg viewBox="0 0 16 16"><circle cx="7" cy="6" r="4.500" /><path d="M10 9l5 6" stroke-width="2" /></svg></button>
      <button aria-label="축소"><svg viewBox="0 0 16 16"><path d="M3 8h10" stroke-width="2" /></svg></button>
      <button aria-label="확대"><svg viewBox="0 0 16 16"><path d="M3 8h10M8 3v10" stroke-width="2" /></svg></button>
      <button class="auto" aria-label="자동">A</button>
    </div>
  </footer>
</div>

<style>
  :global(body) {
    margin: 0;
    background: #000;
  }

  .window {
    display: flex;
    flex-direction: column;
    box-sizing: border-box;
    height: 100vh;
    padding: 1px 1px 3px;
    overflow: hidden;
    background: #000;
    color: #000;
    font-family: 'Liberation Sans', 'Noto Sans CJK KR', sans-serif;
    font-size: 12px;
  }

  button,
  input {
    box-sizing: border-box;
    margin: 0;
    padding: 0;
    border: 0;
    border-radius: 0;
    color: inherit;
    font: inherit;
  }

  button {
    display: flex;
    align-items: center;
    justify-content: center;
    background: none;
  }

  /* title bar */
  .titlebar {
    display: flex;
    align-items: center;
    flex: none;
    height: 24px;
    padding: 0 4px 0 3px;
    background: #3a5591;
    color: #fff;
  }

  .badge {
    width: 11px;
    height: 13px;
    border: 1px solid #c5d0e8;
    border-radius: 3px;
    font-size: 12px;
    font-weight: bold;
    line-height: 13px;
    text-align: center;
  }

  h1 {
    display: flex;
    flex: 1;
    align-items: baseline;
    gap: 8px;
    margin: 0 0 0 6px;
    overflow: hidden;
    font-size: 13px;
    font-weight: normal;
    line-height: 22px;
    white-space: nowrap;
  }

  .window-buttons {
    display: flex;
    align-items: center;
    gap: 4px;
    color: #b4c0de;
  }

  .window-buttons button {
    width: 16px;
    height: 16px;
  }

  .window-buttons svg {
    width: 14px;
    height: 14px;
    fill: none;
    stroke: #b4c0de;
    shape-rendering: crispEdges;
  }

  .window-buttons svg.solid {
    fill: #b4c0de;
    stroke: none;
  }

  .window-buttons .letter {
    width: 13px;
    font-family: 'Liberation Serif', serif;
    font-size: 16px;
    font-weight: bold;
  }

  .window-buttons .sans {
    font-family: 'Liberation Sans', sans-serif;
  }

  .divider {
    width: 1px;
    height: 14px;
    margin: 0 3px;
    background: #7080a8;
  }

  /* toolbar */
  .toolbar {
    display: flex;
    flex: none;
    flex-direction: column;
    gap: 3px;
    height: 51px;
    box-sizing: border-box;
    margin: 0 2px;
    padding: 5px 3px 0;
    background: #d0d0d0;
  }

  .controls,
  .quote {
    display: flex;
    align-items: stretch;
    height: 20px;
  }

  .controls {
    gap: 1px;
  }

  .tool,
  .pick,
  .field,
  .name,
  .count {
    height: 20px;
    border: 1px solid #909090;
    background: #f0f0f0;
  }

  .tool {
    width: 20px;
  }

  .controls svg {
    width: 16px;
    height: 16px;
    fill: none;
    stroke: #666;
  }

  .ink {
    fill: #555;
    stroke: none;
  }

  .soft {
    fill: #999;
    stroke: none;
  }

  .controls svg.caret {
    width: 7px;
    height: 4px;
    fill: #444;
    stroke: none;
  }

  .pick {
    justify-content: space-between;
    width: 31px;
    padding-left: 3px;
    background: #fff;
  }

  .pick.muted {
    color: #777;
  }

  .pick.speaker {
    width: 27px;
    padding-left: 0;
    background: #f0f0f0;
  }

  .pick.step {
    width: 38px;
    padding-left: 8px;
    margin-left: 1px;
  }

  .pick i,
  .field i {
    display: flex;
    flex: none;
    align-items: center;
    justify-content: center;
    width: 12px;
    height: 18px;
    border-left: 1px solid #b0b0b0;
    background: #f0f0f0;
  }

  .field {
    display: flex;
    box-sizing: border-box;
    width: 69px;
    background: #fff;
  }

  .field input {
    flex: 1;
    min-width: 0;
    padding-left: 3px;
    background: #fff;
  }

  .credit {
    box-sizing: border-box;
    width: 19px;
    border: 2px solid #a05010;
    background: #006464;
    color: #fff;
    line-height: 15px;
    text-align: center;
  }

  .name {
    width: 63px;
    margin-left: -1px;
    padding-left: 2px;
    background: linear-gradient(135deg, transparent 50%, #b4b4b4 50%) right bottom / 8px 8px no-repeat #fff;
    color: #800040;
  }

  .group {
    display: flex;
    box-sizing: border-box;
    border: 1px solid #909090;
    margin-left: 1px;
    background: #909090;
    gap: 1px;
  }

  .group button {
    width: 18px;
    background: #e8e8e8;
  }

  .group button.active {
    background: #4a82c8;
    color: #fff;
  }

  .group.icons button {
    background: #f0f0f0;
  }

  .count {
    width: 31px;
    padding-left: 2px;
    background: #fff;
  }

  .total {
    width: 32px;
    color: #444;
    line-height: 20px;
  }

  .check {
    display: flex;
    align-items: center;
    gap: 3px;
    margin-left: 1px;
  }

  .check input {
    appearance: none;
    width: 13px;
    height: 13px;
    border: 1px solid #808080;
    background: #fff;
  }

  .check input:checked {
    background: #4a82c8;
  }

  .quote {
    gap: 2px;
  }

  .cells {
    display: flex;
    box-sizing: border-box;
    width: 750px;
    border: 1px solid #808080;
    background: #f0f0f0;
  }

  .cell {
    display: flex;
    align-items: center;
    justify-content: space-between;
    box-sizing: border-box;
    padding: 0 2px;
    border-right: 1px solid #b4b4b4;
    white-space: nowrap;
  }

  .cell b {
    font-weight: normal;
  }

  .first {
    gap: 10px;
    width: 172px;
    padding-left: 29px;
  }

  .first .mark {
    margin: 0 auto 0 -8px;
    font-size: 14px;
  }

  .second {
    gap: 10px;
    width: 170px;
    padding-left: 26px;
  }

  .second .fall {
    margin-left: auto;
  }

  .third {
    width: 82px;
    justify-content: flex-end;
  }

  .fourth {
    width: 140px;
    padding-right: 7px;
  }

  .fifth {
    flex: 1;
    padding-right: 8px;
    border-right: 0;
  }

  .fall {
    color: #1450c8;
  }

  .rise {
    color: #e8190c;
  }

  .order {
    width: 40px;
    border: 1px solid #808080;
  }

  .buy {
    background: #f5cdc8;
  }

  .sell {
    background: #c3dcf5;
  }

  /* chart */
  .chart {
    flex: 1;
    min-height: 0;
    margin: 0 2px;
    padding: 0 2px;
    background: #e0e0e0;
  }

  .plot {
    display: block;
    width: 100%;
    height: 100%;
    shape-rendering: crispEdges;
  }

  .plot text {
    font-size: 12px;
  }

  .plot .legend {
    fill: #333;
    font-size: 13px;
  }

  .grid path {
    fill: none;
    stroke: #d2d2d2;
    stroke-dasharray: 5 4;
  }

  .line {
    fill: none;
    stroke-linejoin: round;
    stroke-linecap: round;
  }

  .ghost {
    stroke: #fff;
    stroke-dasharray: 3 3;
    stroke-linecap: butt;
  }

  .dots {
    stroke-width: 4;
    stroke-dasharray: 2 5;
  }

  .plot .axis text {
    fill: #444;
    font-size: 11px;
  }

  .plot .axis .stamp {
    font-size: 12px;
  }

  .plot .axis .rise,
  .plot .axis .hot {
    fill: #e8190c;
  }

  .plot .axis .fall {
    fill: #1450c8;
  }

  .plot .axis .on {
    fill: #fff;
  }

  .tag {
    fill: #ffe070;
    stroke: #000;
  }

  /* bottom bar */
  .bottom {
    display: flex;
    flex: none;
    align-items: center;
    height: 20px;
    margin: 0 2px;
    padding: 0 3px;
    background: #ececec;
  }

  .scroll {
    display: flex;
    flex: 1;
    height: 17px;
  }

  .scroll button,
  .play button {
    width: 17px;
    height: 17px;
    box-sizing: border-box;
    border: 1px solid;
    border-color: #fff #707070 #707070 #fff;
    background: #f0f0f0;
  }

  .scroll svg,
  .play svg {
    width: 10px;
    height: 9px;
    fill: #000;
  }

  .track {
    display: flex;
    flex: 1;
    justify-content: flex-end;
    background: #f6f6f6;
  }

  .thumb {
    box-sizing: border-box;
    width: 54%;
    border: 1px solid;
    border-color: #fff #707070 #707070 #d0d0d0;
    background: #f0f0f0;
  }

  .play {
    display: flex;
    margin-left: 1px;
  }

  .zoom {
    appearance: none;
    width: 70px;
    height: 17px;
    margin: 0 5px 0 6px;
    background:
      repeating-linear-gradient(90deg, #000 0 1px, transparent 1px 7px) 2px 14px / 66px 3px no-repeat,
      linear-gradient(#808080, #808080) 0 5px / 100% 1px no-repeat;
  }

  .zoom::-webkit-slider-thumb {
    appearance: none;
    width: 4px;
    height: 11px;
    border: 1px solid #808080;
    background: #f0f0f0;
    margin-top: -5px;
  }

  .drawing {
    display: flex;
  }

  .drawing button {
    width: 17px;
    height: 18px;
  }

  .drawing button.on {
    background: #fff;
  }

  .drawing svg {
    width: 15px;
    height: 15px;
    fill: none;
    stroke: #666;
  }

  .drawing .auto {
    color: #555;
    font-size: 14px;
    font-weight: bold;
  }
</style>
